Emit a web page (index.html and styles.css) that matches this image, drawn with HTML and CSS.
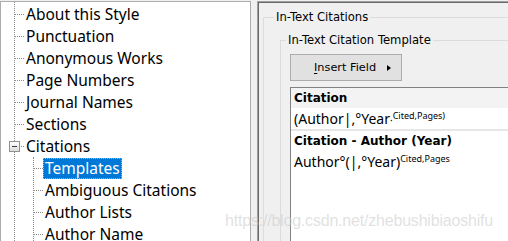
FILE: index.html
```html
<!DOCTYPE html>
<html>
<head>
<meta charset="utf-8">
<link rel="stylesheet" href="styles.css">
</head>
<body>
<div class="window">
  <div class="tree-panel">
    <ul class="tree">
      <li><div class="row"><span class="lbl">About this Style</span></div></li>
      <li><div class="row"><span class="lbl">Punctuation</span></div></li>
      <li><div class="row"><span class="lbl">Anonymous Works</span></div></li>
      <li><div class="row"><span class="lbl">Page Numbers</span></div></li>
      <li><div class="row"><span class="lbl">Journal Names</span></div></li>
      <li><div class="row"><span class="lbl">Sections</span></div></li>
      <li>
        <div class="row"><span class="toggle"><span class="minus"></span></span><span class="lbl">Citations</span></div>
        <ul class="sub">
          <li><div class="row"><span class="lbl sel">Templates</span></div></li>
          <li><div class="row"><span class="lbl">Ambiguous Citations</span></div></li>
          <li><div class="row"><span class="lbl">Author Lists</span></div></li>
          <li><div class="row"><span class="lbl">Author Name</span></div></li>
        </ul>
      </li>
    </ul>
  </div>
  <div class="right">
    <div class="group g1">
      <div class="legend l1">In-Text Citations</div>
      <div class="group g2">
        <div class="legend l2">In-Text Citation Template</div>
        <div class="btn"><span class="btn-text"><u>I</u>nsert Field</span><span class="arrow"></span></div>
        <div class="editor">
          <div class="head head-active">Citation</div>
          <div class="line">(Author|,°Year<span class="dot">·</span><sup>Cited,Pages)</sup></div>
          <div class="sep"></div>
          <div class="head">Citation - Author (Year)</div>
          <div class="line">Author°(|,°Year)<sup>Cited,Pages</sup></div>
        </div>
      </div>
    </div>
  </div>
  <div class="watermark">https://blog.csdn.net/zhebushibiaoshifu</div>
</div>
</body>
</html>
```
FILE: styles.css
```css
html, body {
  margin: 0;
  padding: 0;
  background: #f0f0f0;
  overflow: hidden;
}
.window {
  position: relative;
  display: flex;
  align-items: flex-start;
  gap: 6px;
  padding-top: 1px;
  width: 508px;
  height: 241px;
  box-sizing: border-box;
  overflow: hidden;
}
.tree-panel {
  width: 249px;
  height: 260px;
  flex: none;
  background: #fff;
  border: 1px solid #adadad;
  font-family: "Noto Sans", "Open Sans", sans-serif;
  font-size: 15.5px;
  color: #000;
}
.tree, .sub {
  list-style: none;
  margin: 0;
  padding: 0;
}
.tree {
  margin-left: 13px;
  padding-top: 1px;
  border-left: 1px dotted #8c8c8c;
}
.sub {
  margin-left: 18px;
  border-left: 1px dotted #8c8c8c;
}
.row {
  position: relative;
  display: flex;
  align-items: center;
  height: 22px;
}
.row::before {
  content: "";
  width: 9px;
  flex: none;
  border-top: 1px dotted #8c8c8c;
}
.lbl {
  padding: 0 2px;
  height: 21px;
  line-height: 20px;
  white-space: nowrap;
}
.lbl.sel {
  background: #0078d7;
  color: #fff;
  outline: 1px dotted #f7a541;
  outline-offset: -1px;
}
.toggle {
  position: absolute;
  left: -6px;
  top: 6px;
  width: 9px;
  height: 9px;
  border: 1px solid #919191;
  background: linear-gradient(#ffffff, #dcdcdc);
  display: flex;
  align-items: center;
  justify-content: center;
}
.minus {
  width: 5px;
  height: 1px;
  background: #3a3a3a;
}
.right {
  flex: 1;
  height: 260px;
  border-top: 1px solid #a0a0a0;
  border-left: 1px solid #a0a0a0;
  box-shadow: inset 1px 1px 0 #696969;
  padding: 1px 0 0 1px;
  font-family: "DejaVu Sans", sans-serif;
  font-size: 11.6px;
  color: #000;
}
.group {
  border-top: 1px solid #dcdcdc;
  border-left: 1px solid #dcdcdc;
}
.g1 {
  margin: 14px 0 0 4px;
  height: 240px;
}
.g2 {
  margin: 16px 0 0 16px;
  height: 200px;
}
.legend {
  width: fit-content;
  background: #f0f0f0;
  padding: 0 2px;
  height: 14px;
  line-height: 14px;
  margin-top: -8px;
  white-space: nowrap;
}
.l1 { margin-left: 10px; }
.l2 { margin-left: 5px; }
.btn {
  margin: 7px 0 0 9px;
  width: 112px;
  height: 27px;
  box-sizing: border-box;
  background: #e1e1e1;
  border: 1px solid #adadad;
  display: flex;
  align-items: center;
  padding-left: 23px;
  font-size: 11.3px;
}
.btn u { text-decoration-thickness: 1px; text-underline-offset: 2px; }
.arrow {
  margin-left: 11px;
  width: 0;
  height: 0;
  border-top: 3.5px solid transparent;
  border-bottom: 3.5px solid transparent;
  border-left: 4px solid #000;
}
.editor {
  margin: 6px 0 0 9px;
  height: 160px;
  background: #fff;
  border-top: 1px solid #828282;
  border-left: 1px solid #828282;
}
.head {
  height: 20px;
  line-height: 20px;
  padding-left: 3px;
  font-weight: bold;
  font-size: 12px;
  white-space: nowrap;
}
.head-active {
  background: #f3f3f3;
}
.line {
  height: 21px;
  line-height: 21px;
  padding-left: 3px;
  font-family: "Noto Sans", "Open Sans", sans-serif;
  font-size: 14px;
  white-space: nowrap;
}
.line sup {
  font-size: 9px;
  vertical-align: 5px;
  line-height: 0;
}
.dot { font-size: 10px; }
.sep {
  height: 2px;
  background: #e6e6e6;
}
.watermark {
  position: absolute;
  left: 225px;
  top: 212px;
  font-family: "Liberation Sans", sans-serif;
  font-size: 16px;
  letter-spacing: -0.2px;
  color: rgba(200, 200, 200, 0.55);
  white-space: nowrap;
}
```
